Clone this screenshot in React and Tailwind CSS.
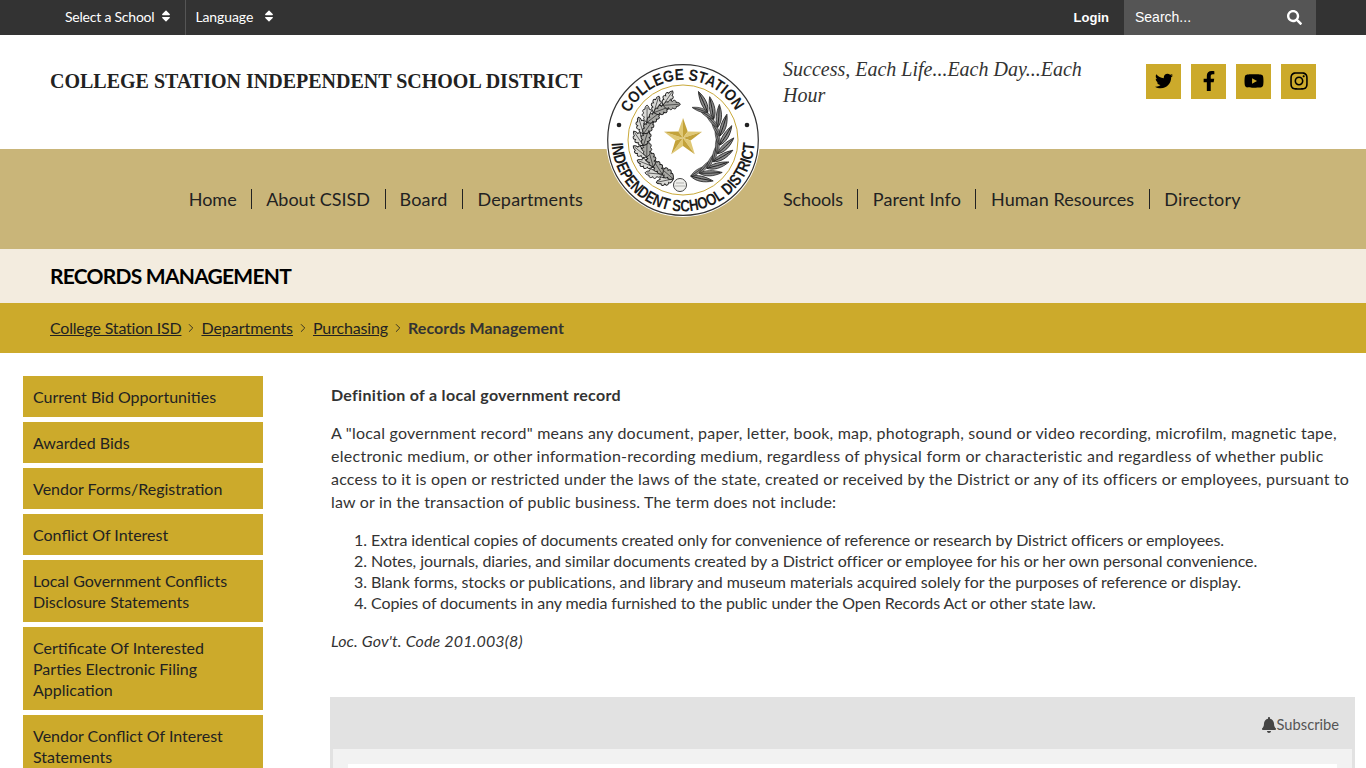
import React from "react";
import { FaTwitter, FaFacebookF, FaYoutube, FaInstagram, FaSearch, FaBell, FaSort } from "react-icons/fa";
import { ChevronRight } from "lucide-react";

const navL = [
  ["Home", "pr-[14px]"],
  ["About CSISD", "px-[14.5px] border-l border-[#222]"],
  ["Board", "pl-[14px] pr-[14.5px] border-l border-[#222] tracking-[0.2px]"],
  ["Departments", "pl-[14.5px] border-l border-[#222] tracking-[0.18px]"],
];
const navR = [
  ["Schools", "pr-[14.5px] tracking-[-0.14px]"],
  ["Parent Info", "px-[14.5px] border-l border-[#222] tracking-[0.09px]"],
  ["Human Resources", "px-[14.5px] border-l border-[#222] tracking-[0.07px]"],
  ["Directory", "pl-[14.5px] border-l border-[#222] tracking-[0.22px]"],
];
const side = [
  ["Current Bid Opportunities"],
  ["Awarded Bids"],
  ["Vendor Forms/Registration"],
  ["Conflict Of Interest"],
  ["Local Government Conflicts", "Disclosure Statements"],
  ["Certificate Of Interested", "Parties Electronic Filing", "Application"],
  ["Vendor Conflict Of Interest", "Statements"],
];

function Nav({ items }) {
  return (
    <ul className="flex items-center">
      {items.map(([t, cls]) => (
        <li key={t} className={"text-[18px] leading-[20px] text-[#222] " + cls}>
          {t}
        </li>
      ))}
    </ul>
  );
}

const OAK = "M0 0 C2 -3 4 -4 5 -2.5 C6 -5 8 -5.5 9 -3 C10.5 -5 13 -4 12.5 -2 C15 -2 16 -1 16.5 0 C16 1 15 2 12.5 2 C13 4 10.5 5 9 3 C8 5.5 6 5 5 2.5 C4 4 2 3 0 0Z";
const OLIVE = "M0 0 C6 -4 14 -4 23 0 C14 3 6 3 0 0Z";

function Branch({ kind, start, end, step, r, spread }) {
  const out = [];
  let n = 0;
  for (let deg = start; deg <= end; deg += step) {
    const p = (deg * Math.PI) / 180;
    const x = 77 - r * Math.sin(p);
    const y = 77 + r * Math.cos(p);
    const t = (Math.atan2(-Math.sin(p), -Math.cos(p)) * 180) / Math.PI;
    [-spread, spread].forEach((s, j) => {
      const rot = t + s;
      const key = n + "-" + j;
      if (kind === "oak") {
        out.push(
          <g key={key} transform={`translate(${x} ${y}) rotate(${rot}) scale(1.05)`}>
            <path d={OAK} fill={j === 0 ? "#d8d8d5" : "#a8a8a4"} stroke="#1d1d1d" strokeWidth="0.9" />
            <path d="M0 0 H15" stroke="#222" strokeWidth="0.6" />
          </g>
        );
      } else {
        const sc = j === 0 ? 1 : 0.72;
        out.push(
          <g key={key} transform={`translate(${x} ${y}) rotate(${rot}) scale(${sc})`}>
            <path d={OLIVE} fill="#8a8a8a" stroke="#111" strokeWidth="0.7" />
            <path d="M1 0 C8 -0.4 14 -0.4 21 0" stroke="#111" strokeWidth="0.8" fill="none" />
          </g>
        );
      }
    });
    n++;
  }
  return <g>{out}</g>;
}

function Star() {
  const tips = [0, 1, 2, 3, 4].map((i) => {
    const a = ((-90 + i * 72) * Math.PI) / 180;
    return [77 + 20 * Math.cos(a), 75 + 20 * Math.sin(a)];
  });
  const valleys = [0, 1, 2, 3, 4].map((i) => {
    const a = ((-54 + i * 72) * Math.PI) / 180;
    return [77 + 8 * Math.cos(a), 75 + 8 * Math.sin(a)];
  });
  const tri = [];
  tips.forEach((t, i) => {
    const before = valleys[(i + 4) % 5];
    const after = valleys[i];
    tri.push(<polygon key={"a" + i} points={`77,75 ${before.join(",")} ${t.join(",")}`} fill="#e0c874" />);
    tri.push(<polygon key={"b" + i} points={`77,75 ${after.join(",")} ${t.join(",")}`} fill="#c3a23a" />);
  });
  return <g>{tri}</g>;
}

function Seal() {
  return (
    <svg width="154" height="154" viewBox="0 0 154 154">
      <circle cx="77" cy="77" r="77" fill="#fff" />
      <circle cx="77" cy="77" r="75.3" fill="none" stroke="#333" strokeWidth="1.2" />
      <circle cx="77" cy="77" r="55" fill="#fff" stroke="#c9a93a" strokeWidth="1" />
      <defs>
        <path id="sealTop" d="M 17 77 A 60 60 0 0 1 137 77" />
        <path id="sealBot" d="M 5.5 77 A 71.5 71.5 0 0 0 148.5 77" />
      </defs>
      <text fontFamily="'Liberation Sans', sans-serif" fontWeight="700" fontSize="16" fill="#1a1a1a">
        <textPath href="#sealTop" startOffset="28" textLength="130" lengthAdjust="spacingAndGlyphs">COLLEGE STATION</textPath>
      </text>
      <text fontFamily="'Liberation Sans', sans-serif" fontWeight="700" fontSize="16.5" fill="#1a1a1a">
        <textPath href="#sealBot" startOffset="3" textLength="218" lengthAdjust="spacingAndGlyphs">INDEPENDENT SCHOOL DISTRICT</textPath>
      </text>
      <circle cx="13" cy="62" r="2.3" fill="#222" />
      <circle cx="141" cy="62" r="2.3" fill="#222" />
      <Branch kind="oak" start={14} end={155} step={17} r={40} spread={26} />
      <g transform="translate(154 0) scale(-1 1)">
        <Branch kind="olive" start={12} end={150} step={14} r={37} spread={24} />
      </g>
      <circle cx="74" cy="122" r="6.5" fill="#efefec" stroke="#444" strokeWidth="1" />
      <path d="M70 120 L78 120 M69 123 L79 123" stroke="#888" strokeWidth="0.6" />
      <Star />
    </svg>
  );
}

export default function App() {
  return (
    <div className="relative h-[768px] w-[1366px] overflow-hidden bg-white font-['Lato','Liberation_Sans',sans-serif] text-[#333]">
      {/* top bar */}
      <div className="flex h-[35px] items-stretch bg-[#333] pl-[65px] pr-[50px] text-white">
        <div className="flex items-center border-r border-[#555] pb-[3px] pr-[12px] text-[14px] tracking-[-0.22px]">
          Select a School <FaSort className="ml-[5px] text-[14px]" />
        </div>
        <div className="flex items-center pb-[3px] pl-[9px] text-[14px] tracking-[-0.1px]">
          Language <FaSort className="ml-[9px] text-[14px]" />
        </div>
        <div className="ml-auto flex items-center pr-[15px] font-['Liberation_Sans',sans-serif] text-[13px] font-bold">Login</div>
        <div className="flex w-[192px] items-center justify-between bg-[#555] pl-[11px] pr-[14px] font-['Liberation_Sans',sans-serif] text-[14px]">
          Search... <FaSearch className="text-[15px]" />
        </div>
      </div>
      {/* header */}
      <div className="flex h-[114px] items-start pl-[50px] pr-[50px]">
        <div className="w-[733px] pt-[33px] font-['Liberation_Serif',serif] text-[20px] font-bold leading-[26px] text-[#222]">
          COLLEGE STATION INDEPENDENT SCHOOL DISTRICT
        </div>
        <div className="w-[313px] pt-[21px] font-['Liberation_Serif',serif] text-[20px] italic leading-[26px] text-[#333]">
          Success, Each Life...Each Day...Each Hour
        </div>
        <div className="ml-auto flex gap-[10px] pt-[29px] text-black">
          <div className="flex size-[35px] items-center justify-center bg-[#ccaa2b] pb-[2px] text-[18px]"><FaTwitter /></div>
          <div className="flex size-[35px] items-center justify-center bg-[#ccaa2b] pb-[2px] text-[20px]"><FaFacebookF /></div>
          <div className="flex size-[35px] items-center justify-center bg-[#ccaa2b] pb-[2px] text-[20px]"><FaYoutube /></div>
          <div className="flex size-[35px] items-center justify-center bg-[#ccaa2b] pb-[2px] text-[20px]"><FaInstagram /></div>
        </div>
      </div>
      {/* nav */}
      <div className="flex h-[100px] items-center gap-[200px] bg-[#c9b579]">
        <div className="flex w-[583px] justify-end"><Nav items={navL} /></div>
        <div className="flex justify-start"><Nav items={navR} /></div>
      </div>
      {/* seal */}
      <div className="absolute left-[606px] top-[63px]"><Seal /></div>
      {/* title */}
      <div className="flex h-[54px] items-center bg-[#f3ecdf] pl-[50px] text-[21px] font-bold tracking-[-0.76px] text-black">RECORDS MANAGEMENT</div>
      {/* breadcrumb */}
      <div className="flex h-[50px] items-center bg-[#ccaa2b] pl-[50px] text-[16px] text-[#222]">
        <span className="tracking-[-0.2px] underline">College Station ISD</span>
        <ChevronRight className="mx-[3px] size-[14px]" strokeWidth={1.5} />
        <span className="tracking-[-0.05px] underline">Departments</span>
        <ChevronRight className="mx-[3px] size-[14px]" strokeWidth={1.5} />
        <span className="tracking-[-0.15px] underline">Purchasing</span>
        <ChevronRight className="mx-[3px] size-[14px]" strokeWidth={1.5} />
        <span className="font-bold tracking-[0.08px] text-[#333]">Records Management</span>
      </div>
      {/* main */}
      <div className="flex pl-[23px] pt-[23px]">
        <div className="flex w-[240px] shrink-0 flex-col gap-[5px]">
          {side.map((lines) => (
            <div key={lines[0]} className="bg-[#ccaa2b] px-[10px] py-[10px] text-[16px] leading-[21px] text-[#222]">
              {lines.map((l) => <div key={l}>{l}</div>)}
            </div>
          ))}
        </div>
        <div className="ml-[68px] w-[1025px] pt-[7px] text-[16px] leading-[23px] text-[#333]">
          <p className="mb-[15px] font-bold tracking-[0.3px]">Definition of a local government record</p>
          <p className="mb-[16px]">
            <span className="block whitespace-nowrap tracking-[0.214px]">A "local government record" means any document, paper, letter, book, map, photograph, sound or video recording, microfilm, magnetic tape,</span>
            <span className="block whitespace-nowrap tracking-[0.283px]">electronic medium, or other information-recording medium, regardless of physical form or characteristic and regardless of whether public</span>
            <span className="block whitespace-nowrap tracking-[0.2px]">access to it is open or restricted under the laws of the state, created or received by the District or any of its officers or employees, pursuant to</span>
            <span className="block whitespace-nowrap tracking-[0.173px]">law or in the transaction of public business. The term does not include:</span>
          </p>
          <ol className="mb-[16px] list-decimal pl-[40px] leading-[21px]">
            <li className="tracking-[-0.06px]">Extra identical copies of documents created only for convenience of reference or research by District officers or employees.</li>
            <li className="tracking-[-0.075px]">Notes, journals, diaries, and similar documents created by a District officer or employee for his or her own personal convenience.</li>
            <li className="tracking-[-0.05px]">Blank forms, stocks or publications, and library and museum materials acquired solely for the purposes of reference or display.</li>
            <li className="tracking-[-0.11px]">Copies of documents in any media furnished to the public under the Open Records Act or other state law.</li>
          </ol>
          <p className="italic tracking-[0.15px]">Loc. Gov't. Code 201.003(8)</p>
          <div className="-ml-[1px] mr-[1px] mt-[45px] bg-[#e2e2e2] px-[3px] pb-[3px]">
            <div className="flex h-[52px] items-center justify-end pr-[13px] pt-[3px] text-[14.7px] text-[#555]"><FaBell className="text-[16px] text-[#444]" />Subscribe</div>
            <div className="h-[60px] bg-[#f2f2f2] px-[15px] pt-[15px]"><div className="h-[40px] bg-white" /></div>
          </div>
        </div>
      </div>
    </div>
  );
}
